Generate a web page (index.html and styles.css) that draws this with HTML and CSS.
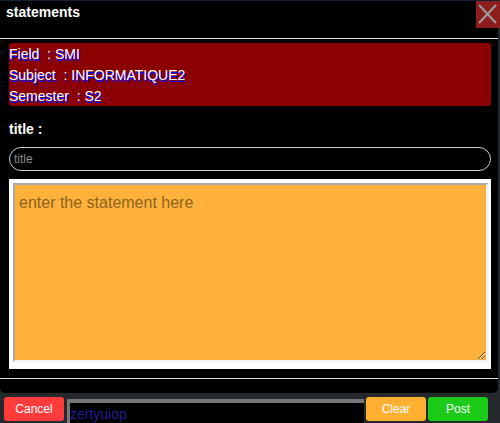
FILE: index.html
```html
<!DOCTYPE html>
<html>
<head>
<meta charset="utf-8">
<link rel="stylesheet" href="styles.css">
</head>
<body>
<div class="modal">
  <div class="modal-head">statements</div>
  <button class="close" aria-label="close">
    <svg width="24" height="27" viewBox="0 0 24 27"><path d="M3 4 L20 22 M20 4 L3 22" stroke="#9c9c9c" stroke-width="2" fill="none"/></svg>
  </button>
  <div class="rule"></div>
  <div class="modal-body">
    <div class="info">
      <div>Field&nbsp; : SMI</div>
      <div>Subject&nbsp; : INFORMATIQUE2</div>
      <div>Semester&nbsp; : S2</div>
    </div>
    <div class="label">title :</div>
    <input class="title-input" type="text" placeholder="title">
    <div class="area-wrap">
      <textarea class="statement" placeholder="enter the statement here"></textarea>
    </div>
  </div>
  <div class="rule rule-bottom"></div>
</div>
<div class="footer">
  <button class="btn btn-cancel">Cancel</button>
  <div class="msg">zertyuiop</div>
  <button class="btn btn-clear">Clear</button>
  <button class="btn btn-post">Post</button>
</div>
</body>
</html>
```
FILE: styles.css
```css
html, body {
  margin: 0;
  padding: 0;
}
body {
  width: 500px;
  height: 423px;
  overflow: hidden;
  background: #25292c;
  font-family: "Liberation Sans", Arial, sans-serif;
}
.modal {
  position: relative;
  width: 498px;
  height: 393px;
  box-sizing: border-box;
  background: #000;
  border-top: 1px solid #13202f;
  border-radius: 0 0 5px 5px;
}
.modal-head {
  height: 37px;
  box-sizing: border-box;
  padding: 4px 0 0 6px;
  color: #fff;
  font-weight: bold;
  font-size: 14px;
  line-height: 15px;
}
.close {
  position: absolute;
  top: 0;
  right: -2px;
  width: 24px;
  height: 27px;
  padding: 0;
  border: 0;
  background: #8c1e1e;
  display: block;
}
.close svg { display: block; }
.rule {
  height: 1px;
  background: #e2e2e2;
}
.modal-body {
  padding: 4px 7px 0 9px;
}
.info {
  background: #8b0000;
  border-radius: 3px;
  height: 63px;
  box-sizing: border-box;
  padding-top: 1px;
  color: #fff;
  font-size: 14px;
  line-height: 21px;
  text-shadow: 1px 2px 0 #0000ff;
}
.label {
  margin-top: 15px;
  color: #fff;
  font-weight: bold;
  font-size: 14px;
  line-height: 16px;
}
.title-input {
  display: block;
  margin-top: 10px;
  width: 100%;
  height: 24px;
  box-sizing: border-box;
  border: 1px solid #cfcfcf;
  border-radius: 12px;
  background: #000;
  padding: 0 4px;
  font-family: "Liberation Sans", Arial, sans-serif;
  font-size: 12px;
  color: #ccc;
  outline: none;
}
.title-input::placeholder { color: #8a8a8a; }
.area-wrap {
  margin-top: 8px;
  height: 190px;
  box-sizing: border-box;
  background: #fff;
  padding: 4px 3px 7px 4px;
}
.statement {
  display: block;
  width: 100%;
  height: 179px;
  box-sizing: border-box;
  margin: 0;
  border: 2px solid;
  border-color: #a9a9a9 #f4f4f4 #f4f4f4 #a9a9a9;
  background: #ffb13b;
  padding: 9px 4px;
  font-family: "Liberation Sans", Arial, sans-serif;
  font-size: 16px;
  outline: none;
}
.statement::placeholder { color: #8b6522; }
.rule-bottom {
  margin-top: 9px;
}
.footer {
  display: flex;
  align-items: flex-start;
  padding: 4px 12px 0 4px;
  height: 30px;
  box-sizing: border-box;
}
.btn {
  width: 60px;
  height: 24px;
  border: 0;
  border-radius: 3px;
  color: #fff;
  font-family: "Liberation Sans", Arial, sans-serif;
  font-size: 12px;
  padding: 0;
  flex: none;
}
.btn-cancel { background: #ff3b3b; margin-right: 3px; }
.btn-clear { background: #ffb030; margin-left: 2px; margin-right: 2px; }
.btn-post { background: #1ccb19; }
.msg {
  flex: 1;
  margin-top: 2px;
  height: 40px;
  box-sizing: border-box;
  background: #000;
  border-top: 4px solid #777;
  border-left: 3px solid #777;
  color: #1f1f92;
  font-size: 14px;
  line-height: 16px;
  padding: 3px 0 0 0;
}
```
